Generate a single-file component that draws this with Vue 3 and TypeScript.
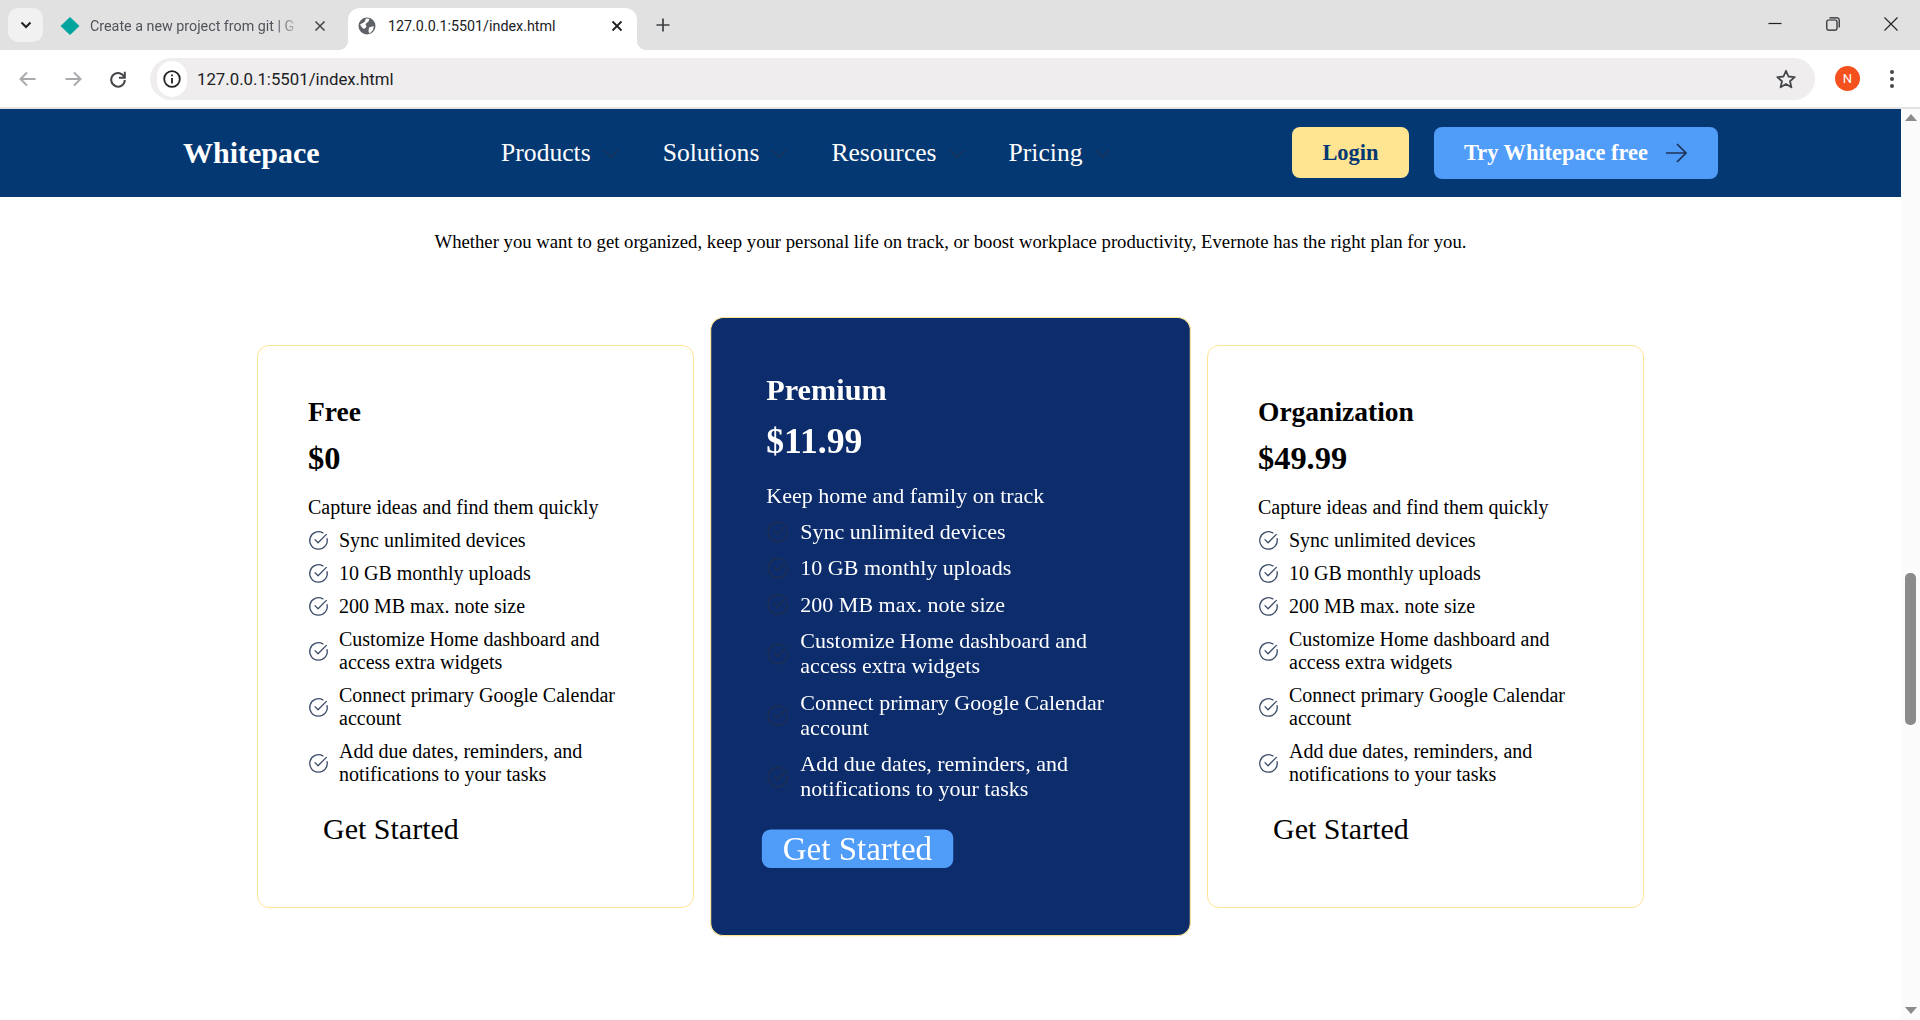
<script setup lang="ts">
interface Plan {
  name: string;
  price: string;
  blurb: string;
  featured?: boolean;
}

const navLinks: string[] = ['Products', 'Solutions', 'Resources', 'Pricing'];

const features: string[] = [
  'Sync unlimited devices',
  '10 GB monthly uploads',
  '200 MB max. note size',
  'Customize Home dashboard and access extra widgets',
  'Connect primary Google Calendar account',
  'Add due dates, reminders, and notifications to your tasks',
];

const plans: Plan[] = [
  { name: 'Free', price: '$0', blurb: 'Capture ideas and find them quickly' },
  { name: 'Premium', price: '$11.99', blurb: 'Keep home and family on track', featured: true },
  { name: 'Organization', price: '$49.99', blurb: 'Capture ideas and find them quickly' },
];
</script>

<template>
  <div class="window">
    <div class="tabstrip">
      <button class="tab-search">
        <svg width="12" height="8" viewBox="0 0 12 8"><path d="M1.500 1.500 6 6l4.500-4.500" fill="none" stroke="#202124" stroke-width="2" /></svg>
      </button>
      <div class="tab">
        <svg class="favicon" width="20" height="20" viewBox="0 0 20 20"><path d="M10 1 19.500 10 10 19 .5 10Z" fill="#00a49f" /></svg>
        <span class="tab-title faded">Create a new project from git | G</span>
        <svg class="tab-close" width="12" height="12" viewBox="0 0 12 12"><path d="M1.500 1.500l9 9m0-9-9 9" stroke="#45474a" stroke-width="1.600" /></svg>
      </div>
      <div class="tab active">
        <svg class="favicon" width="20" height="20" viewBox="0 0 20 20">
          <circle cx="10" cy="10" r="8.500" fill="#5f6368" />
          <path d="M3 8.500 7.500 6 9 2.500 12.500 2.800 11.500 5.500 8.500 8 9.500 11 7 13 5 11.500ZM12 11.500l4.800-1.500L16 14l-3.500 3.500-1-2Z" fill="#fff" />
        </svg>
        <span class="tab-title dark">127.0.0.1:5501/index.html</span>
        <svg class="tab-close" width="12" height="12" viewBox="0 0 12 12"><path d="M1.500 1.500l9 9m0-9-9 9" stroke="#202124" stroke-width="1.800" /></svg>
      </div>
      <svg class="new-tab" width="14" height="14" viewBox="0 0 14 14"><path d="M7 .5v13M.5 7h13" stroke="#3c4043" stroke-width="1.700" /></svg>
      <div class="window-controls">
        <svg width="14" height="14" viewBox="0 0 14 14"><path d="M.5 6.500h13" stroke="#202124" stroke-width="1.200" /></svg>
        <svg width="14" height="14" viewBox="0 0 14 14" fill="none" stroke="#202124" stroke-width="1.200"><rect x=".8" y="3" width="10.200" height="10.200" rx="1.800" /><path d="M3.500.8h7.500a2.200 2.200 0 0 1 2.200 2.200v7.500" /></svg>
        <svg width="14" height="14" viewBox="0 0 14 14"><path d="M.5.500l13 13m0-13-13 13" stroke="#202124" stroke-width="1.100" /></svg>
      </div>
    </div>

    <div class="toolbar">
      <div class="toolbar-nav">
        <svg width="24" height="24" viewBox="0 0 24 24" fill="none" stroke="#a8aaad" stroke-width="2"><path d="M19.500 12h-15M11 5.500 4.500 12l6.500 6.500" /></svg>
        <svg width="24" height="24" viewBox="0 0 24 24" fill="none" stroke="#a8aaad" stroke-width="2"><path d="M4.500 12h15M13 5.500l6.500 6.500-6.500 6.500" /></svg>
        <svg width="24" height="24" viewBox="0 0 24 24" fill="none" stroke="#45474a" stroke-width="2"><path d="M18.400 10.500A6.800 6.800 0 1 0 18.800 13" /><path d="M18.800 4.800v5.900h-5.900" /></svg>
      </div>
      <div class="omnibox">
        <span class="site-info">
          <svg width="20" height="20" viewBox="0 0 20 20" fill="none" stroke="#202124" stroke-width="1.800"><circle cx="10" cy="10" r="7.800" /><path d="M10 9v5.500M10 5.500v1.800" /></svg>
        </span>
        <span class="url">127.0.0.1:5501/index.html</span>
        <svg class="star" width="22" height="22" viewBox="0 0 22 22"><path d="m11 2.800 2.500 5.700 6.200.6-4.700 4.100 1.400 6.100L11 16.100l-5.400 3.200L7 13.200 2.300 9.100l6.200-.6Z" fill="none" stroke="#45474a" stroke-width="1.800" stroke-linejoin="round" /></svg>
      </div>
      <span class="avatar">N</span>
      <span class="kebab"><i></i><i></i><i></i></span>
    </div>

    <div class="viewport">
      <div class="page">
        <header class="site-nav">
          <div class="logo">Whitepace</div>
          <nav class="links">
            <a v-for="link in navLinks" :key="link" class="link">
              {{ link }}
              <svg width="24" height="24" viewBox="0 0 24 24" fill="none" stroke="#1d3356" stroke-width="1.300"><path d="m5 9 7 7 7-7" /></svg>
            </a>
          </nav>
          <div class="actions">
            <button class="login">Login</button>
            <button class="try">
              Try Whitepace free
              <svg width="24" height="24" viewBox="0 0 24 24" fill="none" stroke="#1d3356" stroke-width="1.700"><path d="M2 12h20M13 3l9 9-9 9" /></svg>
            </button>
          </div>
        </header>

        <p class="intro">Whether you want to get organized, keep your personal life on track, or boost workplace productivity, Evernote has the right plan for you.</p>

        <section class="plans">
          <article v-for="plan in plans" :key="plan.name" class="card" :class="{ featured: plan.featured }">
            <h3>{{ plan.name }}</h3>
            <div class="price">{{ plan.price }}</div>
            <p class="blurb">{{ plan.blurb }}</p>
            <ul>
              <li v-for="item in features" :key="item">
                <svg class="check" width="21" height="21" viewBox="0 0 24 24" fill="none" stroke-width="1.500" stroke-linecap="round" stroke-linejoin="round"><path d="M21.800 10A10 10 0 1 1 17 3.300" /><path d="m8 11 3.500 3.500L21 5" /></svg>
                <span>{{ item }}</span>
              </li>
            </ul>
            <button class="start">Get Started</button>
          </article>
        </section>
      </div>

      <div class="scrollbar">
        <i class="arrow up"></i>
        <i class="thumb"></i>
        <i class="arrow down"></i>
      </div>
    </div>
  </div>
</template>

<style scoped>
.window {
  display: flex;
  flex-direction: column;
  height: 1020px;
  overflow: hidden;
  background: #fff;
  font-family: "Liberation Serif", serif;
}

button {
  border: 0;
  font-family: inherit;
}

/* browser frame */
.tabstrip {
  display: flex;
  align-items: flex-end;
  height: 50px;
  flex: none;
  padding-left: 8px;
  background: #e1e1e2;
}

.tab-search {
  display: flex;
  align-items: center;
  justify-content: center;
  width: 35px;
  height: 34px;
  padding: 0;
  margin-bottom: 8px;
  border-radius: 10px;
  background: #f1f1f2;
}

.tab {
  display: flex;
  align-items: center;
  box-sizing: border-box;
  width: 292px;
  height: 42px;
  margin-left: 5px;
  padding: 0 14px 7px 12px;
  font: 14.300px Roboto, sans-serif;
  color: #50535a;
}

.tab.active {
  position: relative;
  width: 289px;
  margin-left: 8px;
  padding: 0 14px 7px 9px;
  background: #fff;
  border-radius: 12px 12px 0 0;
}

.tab.active::before,
.tab.active::after {
  content: "";
  position: absolute;
  bottom: 0;
  width: 10px;
  height: 10px;
}

.tab.active::before {
  left: -10px;
  background: radial-gradient(circle at 0 0, transparent 10px, #fff 10.500px);
}

.tab.active::after {
  right: -10px;
  background: radial-gradient(circle at 100% 0, transparent 10px, #fff 10.500px);
}

.favicon {
  flex: none;
}

.tab-title {
  flex: 1;
  min-width: 0;
  margin-left: 10px;
  white-space: nowrap;
}

.tab.active .tab-title {
  margin-left: 11px;
}

.tab-title.faded {
  -webkit-mask-image: linear-gradient(90deg, #000 88%, transparent);
  mask-image: linear-gradient(90deg, #000 88%, transparent);
}

.tab-title.dark {
  color: #202124;
}

.tab-close {
  flex: none;
  margin-left: 12px;
}

.new-tab {
  margin: 0 0 18px 19px;
}

.window-controls {
  display: flex;
  align-items: center;
  gap: 44px;
  margin: 0 22px 19px auto;
}

.toolbar {
  display: flex;
  align-items: center;
  flex: none;
  height: 57px;
  padding-right: 26px;
  background: #fff;
  border-radius: 12px 12px 0 0;
  box-sizing: content-box;
  border-bottom: 2px solid #e3e3e3;
}

.toolbar-nav {
  display: flex;
  gap: 21px;
  margin-left: 16px;
}

.omnibox {
  display: flex;
  align-items: center;
  flex: 1;
  height: 42px;
  margin-left: 20px;
  padding: 0 18px 0 7px;
  border-radius: 21px;
  background: #efedee;
}

.site-info {
  display: flex;
  align-items: center;
  justify-content: center;
  width: 30px;
  height: 36px;
  border-radius: 18px;
  background: #fff;
}

.url {
  flex: 1;
  margin-left: 10px;
  font: 16.800px Roboto, sans-serif;
  color: #202124;
}

.avatar {
  display: flex;
  align-items: center;
  justify-content: center;
  width: 25px;
  height: 25px;
  margin-left: 20px;
  border-radius: 50%;
  background: #f4511e;
  font: 13px Roboto, sans-serif;
  color: #fff;
}

.kebab {
  display: flex;
  flex-direction: column;
  gap: 3px;
  margin-left: 30px;
}

.kebab i {
  width: 4px;
  height: 4px;
  border-radius: 50%;
  background: #45474a;
}

.viewport {
  display: flex;
  flex: 1;
  min-height: 0;
}

.page {
  flex: 1;
  min-width: 0;
}

.scrollbar {
  display: flex;
  flex-direction: column;
  align-items: center;
  width: 19px;
  flex: none;
  padding: 5px 0 6px;
  box-sizing: border-box;
  background: #fbfbfb;
}

.arrow {
  width: 0;
  height: 0;
  border-left: 6.500px solid transparent;
  border-right: 6.500px solid transparent;
}

.arrow.up {
  border-bottom: 7px solid #8b8b8b;
}

.arrow.down {
  margin-top: auto;
  border-top: 7px solid #8b8b8b;
}

.thumb {
  width: 11px;
  height: 152px;
  margin-top: 452px;
  border-radius: 5px;
  background: #8b8b8b;
}

/* site */
.site-nav {
  display: flex;
  align-items: center;
  justify-content: space-between;
  height: 88px;
  padding: 0 183px;
  background: #043873;
  color: #fff;
}

.logo {
  font-size: 30px;
  font-weight: 700;
}

.links {
  display: flex;
  gap: 40px;
  margin-left: 4px;
}

.link {
  display: flex;
  align-items: center;
  gap: 8px;
  font-size: 25.600px;
}

.actions {
  display: flex;
  align-items: flex-start;
  gap: 25px;
}

.login,
.try {
  height: 51px;
  font-size: 22.400px;
  font-weight: 700;
  border-radius: 8px;
}

.login {
  width: 117px;
  background: #ffe492;
  color: #043873;
}

.try {
  display: flex;
  align-items: center;
  gap: 16px;
  height: 52px;
  padding: 0 30px;
  background: #4f9cf9;
  color: #fff;
}

.intro {
  margin: 34px 0 0;
  text-align: center;
  font-size: 18.720px;
  color: #000;
}

.plans {
  display: flex;
  justify-content: center;
  gap: 38px;
  margin-top: 92px;
}

.card {
  width: 437px;
  height: 562.500px;
  box-sizing: border-box;
  padding: 50px;
  border: 1px solid #ffe492;
  border-radius: 12px;
  background: #fff;
  color: #000;
}

.card.featured {
  transform: scale(1.1);
  background: #0d2c6b;
  color: #fff;
}

h3 {
  margin: 0 0 12px;
  font-size: 27.500px;
  font-weight: 700;
}

.price {
  margin-bottom: 19px;
  font-size: 32.400px;
  font-weight: 700;
}

.blurb {
  margin: 0 0 10px;
  font-size: 20px;
}

ul {
  display: flex;
  flex-direction: column;
  gap: 10px;
  margin: 0 0 25px;
  padding: 0;
  list-style: none;
}

li {
  display: flex;
  align-items: center;
  gap: 10.500px;
  font-size: 20px;
}

.check {
  flex: none;
  margin-left: -0.500px;
  stroke: #3d4d6a;
}

.featured .check {
  stroke: #1d2f52;
}

.start {
  display: block;
  height: 35px;
  margin-left: -4px;
  padding: 0 19px;
  font-size: 30px;
  line-height: 35px;
  border-radius: 8px;
  background: transparent;
  color: #000;
}

.featured .start {
  background: #4f9cf9;
  color: #fff;
}
</style>

<style>
html,
body {
  overflow: hidden;
}
</style>
